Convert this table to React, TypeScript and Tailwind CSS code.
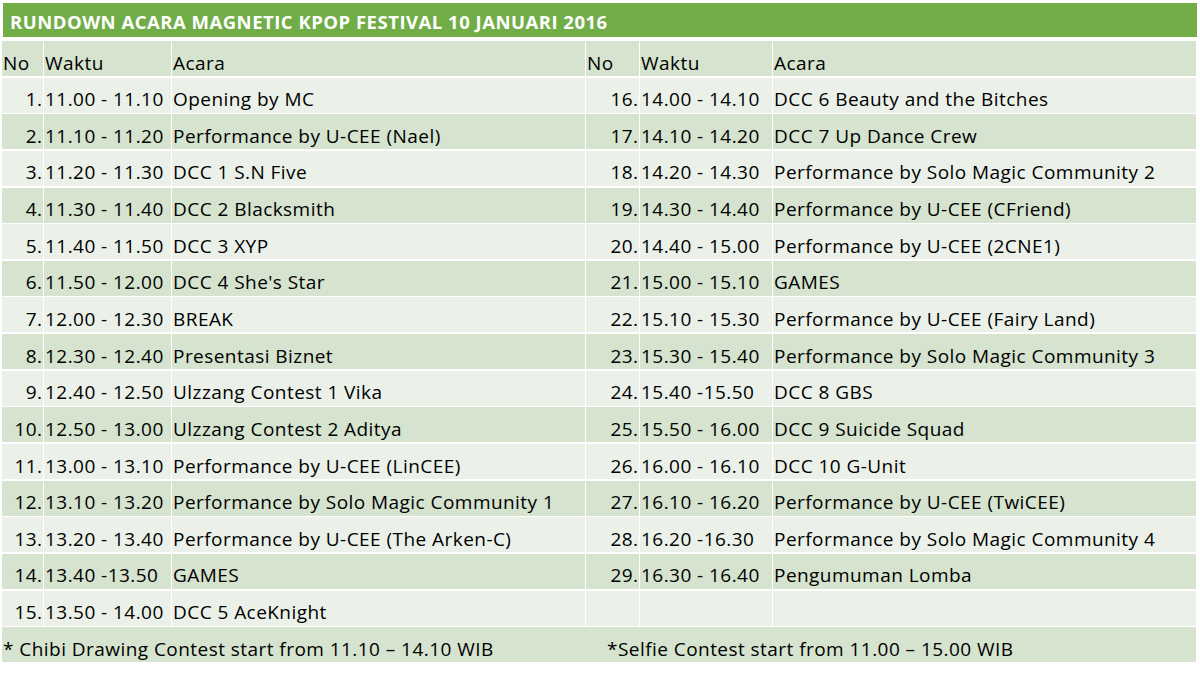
import React from "react";

const left: [string, string, string][] = [
  ["1.", "11.00 - 11.10", "Opening by MC"],
  ["2.", "11.10 - 11.20", "Performance by U-CEE (Nael)"],
  ["3.", "11.20 - 11.30", "DCC 1 S.N Five"],
  ["4.", "11.30 - 11.40", "DCC 2 Blacksmith"],
  ["5.", "11.40 - 11.50", "DCC 3 XYP"],
  ["6.", "11.50 - 12.00", "DCC 4 She's Star"],
  ["7.", "12.00 - 12.30", "BREAK"],
  ["8.", "12.30 - 12.40", "Presentasi Biznet"],
  ["9.", "12.40 - 12.50", "Ulzzang Contest 1 Vika"],
  ["10.", "12.50 - 13.00", "Ulzzang Contest 2 Aditya"],
  ["11.", "13.00 - 13.10", "Performance by U-CEE (LinCEE)"],
  ["12.", "13.10 - 13.20", "Performance by Solo Magic Community 1"],
  ["13.", "13.20 - 13.40", "Performance by U-CEE (The Arken-C)"],
  ["14.", "13.40 -13.50", "GAMES"],
  ["15.", "13.50 - 14.00", "DCC 5 AceKnight"],
];

const right: [string, string, string][] = [
  ["16.", "14.00 - 14.10", "DCC 6 Beauty and the Bitches"],
  ["17.", "14.10 - 14.20", "DCC 7 Up Dance Crew"],
  ["18.", "14.20 - 14.30", "Performance by Solo Magic Community 2"],
  ["19.", "14.30 - 14.40", "Performance by U-CEE (CFriend)"],
  ["20.", "14.40 - 15.00", "Performance by U-CEE (2CNE1)"],
  ["21.", "15.00 - 15.10", "GAMES"],
  ["22.", "15.10 - 15.30", "Performance by U-CEE (Fairy Land)"],
  ["23.", "15.30 - 15.40", "Performance by Solo Magic Community 3"],
  ["24.", "15.40 -15.50", "DCC 8 GBS"],
  ["25.", "15.50 - 16.00", "DCC 9 Suicide Squad"],
  ["26.", "16.00 - 16.10", "DCC 10 G-Unit"],
  ["27.", "16.10 - 16.20", "Performance by U-CEE (TwiCEE)"],
  ["28.", "16.20 -16.30", "Performance by Solo Magic Community 4"],
  ["29.", "16.30 - 16.40", "Pengumuman Lomba"],
  ["", "", ""],
];

function Cell({ dark, align, children }: { dark: boolean; align?: "right"; children?: React.ReactNode }) {
  return (
    <div
      className={`h-[35px] flex items-end pb-[3.5px] whitespace-nowrap overflow-visible ${
        dark ? "bg-[#d5e3cf]" : "bg-[#ebf1e9]"
      } ${align === "right" ? "justify-end pr-0" : "pl-[1px]"}`}
    >
      {children}
    </div>
  );
}

export default function App() {
  return (
    <div
      className="w-[1200px] h-[677px] bg-white pt-[3px] pl-[2px] text-black"
      style={{ fontFamily: "'Open Sans', 'Noto Sans', sans-serif" }}
    >
      <div className="w-[1194px] h-[34px] bg-[#70ad47] ml-[1px] flex items-end pb-[6px] pl-[7px]">
        <span className="text-white font-bold text-[18.5px] tracking-[0.5px] leading-none">
          RUNDOWN ACARA MAGNETIC KPOP FESTIVAL 10 JANUARI 2016
        </span>
      </div>
      <div className="mt-[4px] w-[1194px] grid grid-cols-[40.5px_126.5px_412.5px_52.5px_131.5px_1fr] gap-x-[1.5px] gap-y-[1.65px] text-[19px] tracking-[0.45px] leading-none">
        <Cell dark>No</Cell>
        <Cell dark>Waktu</Cell>
        <Cell dark>Acara</Cell>
        <Cell dark>No</Cell>
        <Cell dark>Waktu</Cell>
        <Cell dark>Acara</Cell>
        {left.map((l, i) => {
          const r = right[i];
          const dark = i % 2 === 1;
          return (
            <React.Fragment key={i}>
              <Cell dark={dark} align="right">{l[0]}</Cell>
              <Cell dark={dark}>{l[1]}</Cell>
              <Cell dark={dark}>{l[2]}</Cell>
              <Cell dark={dark} align="right">{r[0]}</Cell>
              <Cell dark={dark}>{r[1]}</Cell>
              <Cell dark={dark}>{r[2]}</Cell>
            </React.Fragment>
          );
        })}
        <div className="col-span-6 h-[35px] bg-[#d5e3cf] flex items-end pb-[3.5px] pl-[1px] whitespace-nowrap">
          <span className="w-[604px]">* Chibi Drawing Contest start from 11.10 – 14.10 WIB</span>
          <span>*Selfie Contest start from 11.00 – 15.00 WIB</span>
        </div>
      </div>
    </div>
  );
}
